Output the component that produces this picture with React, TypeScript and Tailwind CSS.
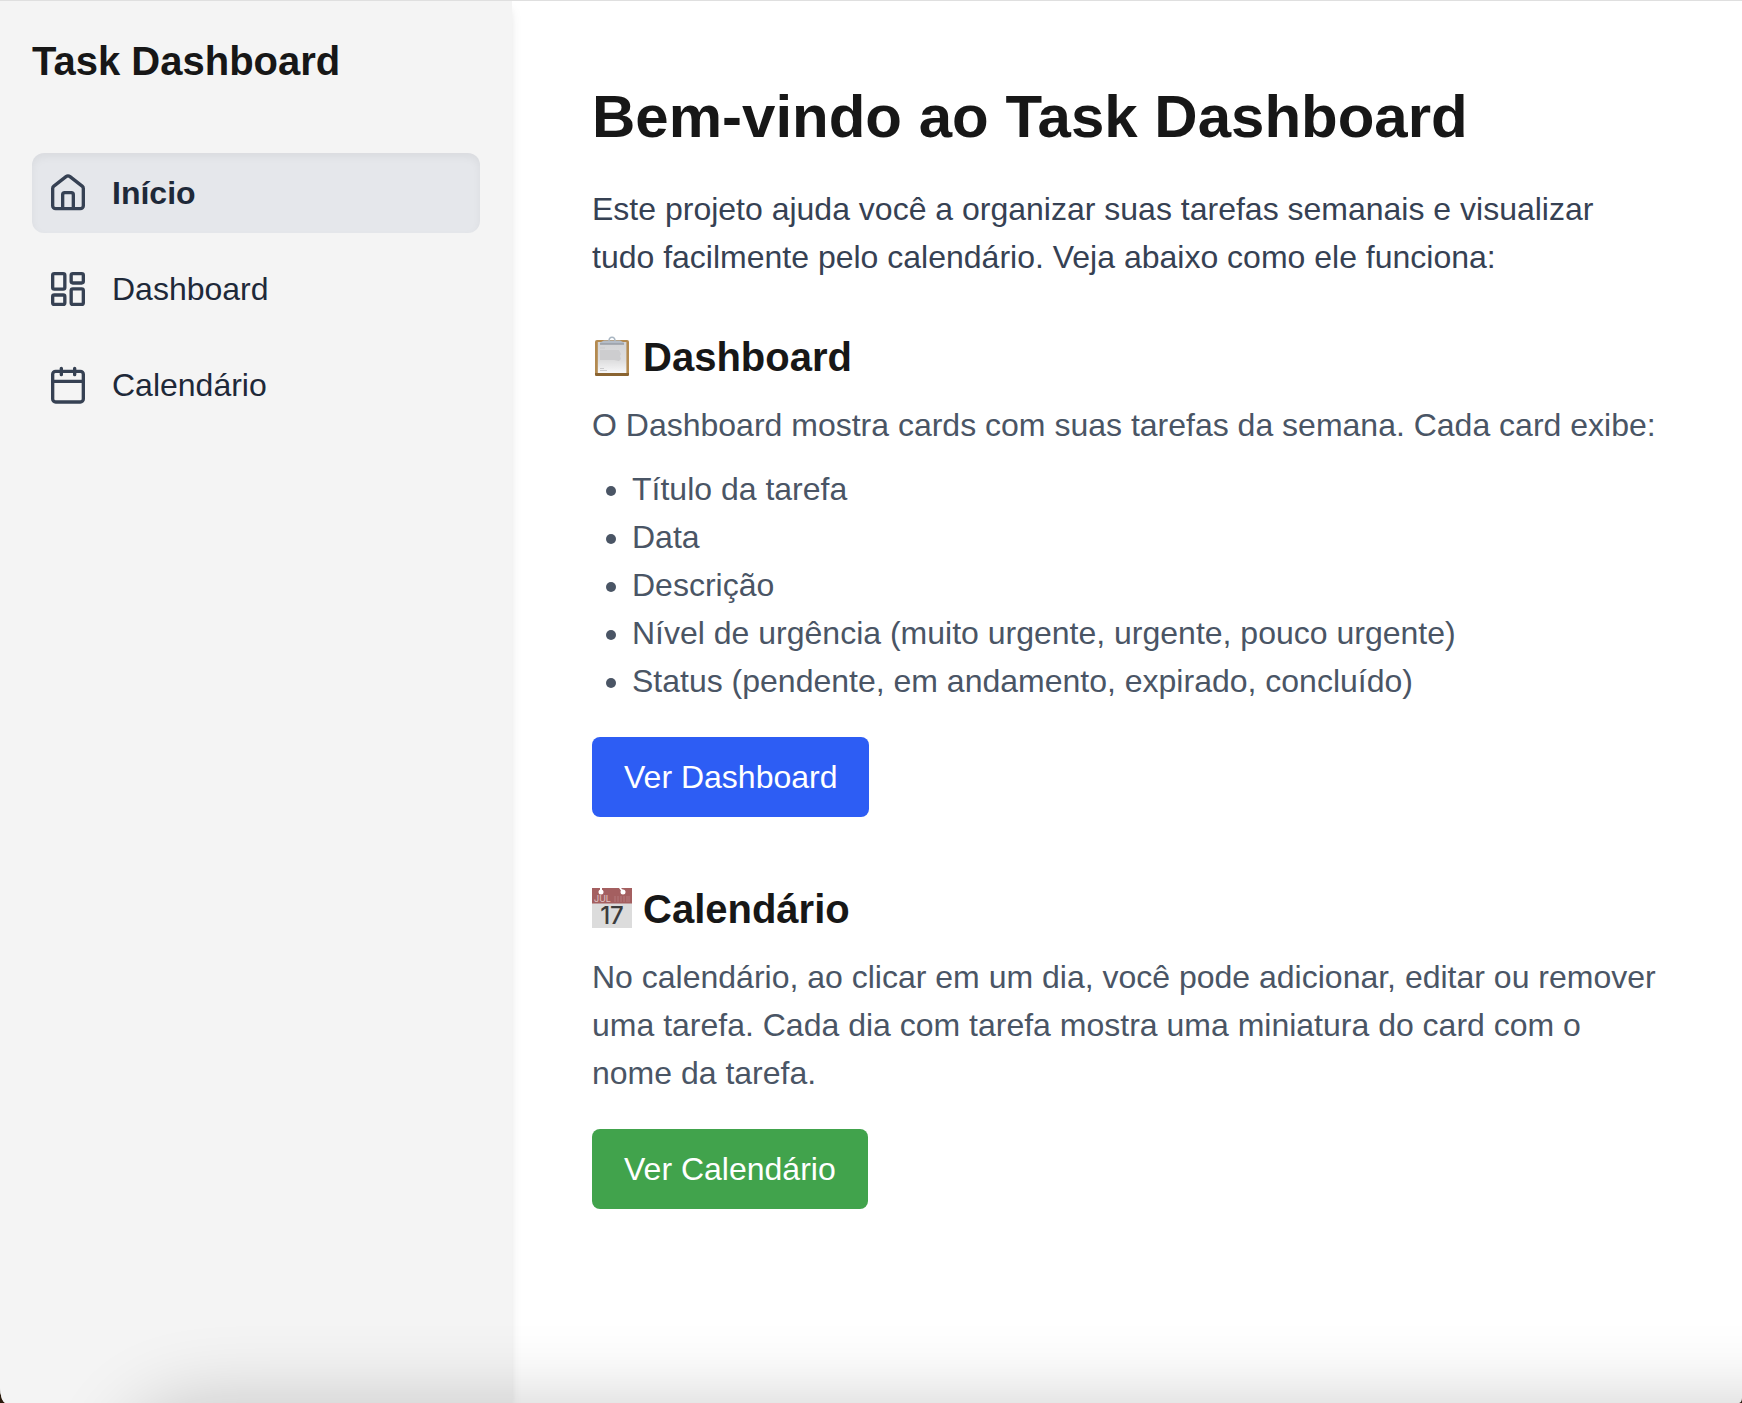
import React from "react";

const iconProps = {
  className: "size-10 shrink-0 text-[#364153]",
  viewBox: "0 0 24 24",
  fill: "none",
  stroke: "currentColor",
  strokeWidth: 2,
  strokeLinecap: "round",
  strokeLinejoin: "round",
  "aria-hidden": true,
} as const;

function HomeIcon() {
  return (
    <svg {...iconProps}>
      <path d="M2.8 9.3c0-.6.3-1.1.7-1.4l7.3-5.7a1.9 1.9 0 0 1 2.4 0l7.3 5.7c.4.3.7.8.7 1.4v10.3a1.8 1.8 0 0 1-1.8 1.8H4.6a1.8 1.8 0 0 1-1.8-1.8z" />
      <path d="M8.8 21.2V13a1.2 1.2 0 0 1 1.2-1.2h4a1.2 1.2 0 0 1 1.2 1.2v8.2" />
    </svg>
  );
}

function DashboardIcon() {
  return (
    <svg {...iconProps}>
      <rect x="2.8" y="2.8" width="7.3" height="9.3" rx="1" />
      <rect x="13.9" y="2.8" width="7.3" height="5.6" rx="1" />
      <rect x="13.9" y="11.9" width="7.3" height="9.3" rx="1" />
      <rect x="2.8" y="15.6" width="7.3" height="5.6" rx="1" />
    </svg>
  );
}

function CalendarIcon() {
  return (
    <svg {...iconProps}>
      <rect x="2.8" y="3.8" width="18.4" height="18.4" rx="1.8" />
      <path d="M2.8 9.8h18.4M8 2v3.8M16 2v3.8" />
    </svg>
  );
}

const navItems = [
  { label: "Início", icon: HomeIcon, active: true },
  { label: "Dashboard", icon: DashboardIcon, active: false },
  { label: "Calendário", icon: CalendarIcon, active: false },
];

const cardFields = [
  "Título da tarefa",
  "Data",
  "Descrição",
  "Nível de urgência (muito urgente, urgente, pouco urgente)",
  "Status (pendente, em andamento, expirado, concluído)",
];

function ClipboardEmoji() {
  return (
    <svg className="h-[42px] w-10 shrink-0" viewBox="0 0 40 42" aria-hidden="true">
      <defs>
        <linearGradient id="paper" x1="0" y1="0" x2="0" y2="1">
          <stop offset="0" stopColor="#d3d4d6" />
          <stop offset="0.6" stopColor="#dededf" />
          <stop offset="1" stopColor="#f8f8f9" />
        </linearGradient>
      </defs>
      <rect x="3" y="4" width="34" height="36" rx="2" fill="#b38a50" />
      <path d="M3 37h34v1.5a1.5 1.5 0 0 1-1.5 1.5h-31A1.5 1.5 0 0 1 3 38.5z" fill="#8a6431" />
      <rect x="5.8" y="6" width="28.6" height="31" fill="url(#paper)" />
      <path d="M8 14h19l2 4-1 2 1 3-2 2-5-1H8z" fill="#cdcdcf" />
      <path d="M8 12h5M8 32.5h4M8 34.5h7" stroke="#cbcbcd" strokeWidth="1" />
      <path d="M17 5c0-5 6-5 6 0" fill="none" stroke="#a9b6c2" strokeWidth="1.5" />
      <path d="M12 4.5h16l4 2v2H8v-2z" fill="#b4bcc6" />
      <path d="M8 8h24" stroke="#8b8f96" strokeWidth="1" />
    </svg>
  );
}

function CalendarEmoji() {
  return (
    <svg className="h-[42px] w-10 shrink-0 font-normal" viewBox="0 0 40 42" aria-hidden="true">
      <rect width="40" height="40" fill="#dcdcdc" />
      <rect width="40" height="15.5" fill="#a45f60" />
      <path d="M8 0h2v4H8zM27 0h2l3 3-2 1z" fill="#fff" />
      <circle cx="9" cy="4" r="2.5" fill="#fff" />
      <circle cx="31" cy="4" r="2.5" fill="#fff" />
      <text x="2" y="14" fontSize="9" fontFamily="Inter, sans-serif" fill="#dfc4c4">
        JUL
      </text>
      <path d="M23 8v6M26 8v6M29 8v6M32 8v6M35 8v6M37 8v6" stroke="#b57b7c" strokeWidth="1" />
      <text x="20" y="36" textAnchor="middle" fontSize="24" fontWeight="500" fontFamily="Inter, sans-serif" fill="#3c3c3c">
        17
      </text>
    </svg>
  );
}

export default function App() {
  return (
    <div className="min-h-screen bg-[#2a1a0c] font-['Liberation_Sans',Arial,sans-serif] text-[32px] leading-[48px]">
      <div className="relative flex min-h-screen overflow-hidden rounded-br-[3px_5px] rounded-bl-[6px_16px] border-t border-[#dfdfdf] bg-white">
        <aside className="w-[512px] shrink-0 bg-[#f4f4f4] p-8 shadow-[0_8px_12px_-2px_rgba(0,0,0,0.1),0_4px_8px_-4px_rgba(0,0,0,0.1)]">
          <div className="mb-16 text-[40px] leading-[56px] font-bold text-[#171717]">Task Dashboard</div>
          <nav className="flex flex-col gap-4">
            {navItems.map(({ label, icon: Icon, active }) => (
              <a
                key={label}
                href="#"
                aria-current={active ? "page" : undefined}
                className={
                  active
                    ? "flex items-center gap-6 rounded-xl bg-[#e5e7eb] p-4 font-bold text-[#1e2939] shadow-[inset_0_4px_8px_rgba(0,0,0,0.05)]"
                    : "flex items-center gap-6 rounded-xl p-4 text-[#1e2939]"
                }
              >
                <Icon />
                <span>{label}</span>
              </a>
            ))}
          </nav>
        </aside>

        <main className="min-w-0 flex-1 p-20">
          <h1 className="mb-8 text-[60px] leading-[72px] font-bold text-[#171717]">Bem-vindo ao Task Dashboard</h1>
          <p className="mb-12 text-[#364153]">
            Este projeto ajuda você a organizar suas tarefas semanais e visualizar tudo facilmente pelo calendário. Veja
            abaixo como ele funciona:
          </p>

          <section className="mb-16">
            <h2 className="mb-4 flex items-center gap-[11px] text-[40px] leading-[56px] font-bold text-[#171717]">
              <ClipboardEmoji />
              Dashboard
            </h2>
            <p className="text-[#4a5565]">O Dashboard mostra cards com suas tarefas da semana. Cada card exibe:</p>
            <ul className="mt-4 list-disc pl-10 text-[#4a5565]">
              {cardFields.map((field) => (
                <li key={field}>{field}</li>
              ))}
            </ul>
            <button type="button" className="mt-8 block rounded-lg bg-[#2d5df4] px-8 py-4 text-white">
              Ver Dashboard
            </button>
          </section>

          <section>
            <h2 className="mb-4 flex items-center gap-[11px] text-[40px] leading-[56px] font-bold text-[#171717]">
              <CalendarEmoji />
              Calendário
            </h2>
            <p className="text-[#4a5565]">
              No calendário, ao clicar em um dia, você pode adicionar, editar ou remover uma tarefa. Cada dia com tarefa
              mostra uma miniatura do card com o nome da tarefa.
            </p>
            <button type="button" className="mt-8 block rounded-lg bg-[#41a34c] px-8 py-4 text-white">
              Ver Calendário
            </button>
          </section>
        </main>

        <div className="pointer-events-none absolute right-[-200px] -bottom-40 left-[120px] h-40 rounded-tl-[80px] shadow-[0_0_80px_rgba(0,0,0,0.2)]" />
      </div>
    </div>
  );
}
